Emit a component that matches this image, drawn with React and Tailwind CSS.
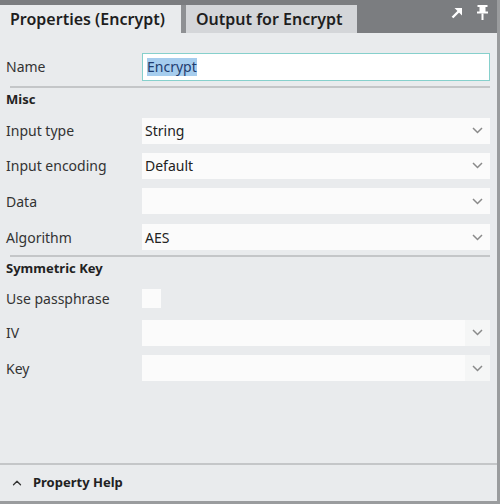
import { ChevronDown, ChevronUp } from 'lucide-react';

const Row = ({ label, h = 'h-[35px]', children }) => (
    <div className={`flex items-center ${h}`}>
        <span className="w-[142px] pl-[6px] text-[14px] text-[#333]">{label}</span>
        <div className="flex-1 pr-[7px]">{children}</div>
    </div>
);

const Select = ({ value, split }) => (
    <div className="flex items-center h-[26px] bg-[#fbfbfb]">
        <span className="flex-1 pl-[3px] text-[14px] text-[#222]">{value}</span>
        <span className={`flex items-center justify-center w-[25px] h-full ${split ? 'bg-[#f5f6f6]' : ''}`}>
            <svg width="11" height="7" viewBox="0 0 11 7" fill="none">
                <path d="M1 1 L5.5 5.5 L10 1" stroke="#8a8a8a" strokeWidth="1.5" />
            </svg>
        </span>
    </div>
);

const Section = ({ title }) => (
    <div className="h-[24px] flex items-center pl-[6px] text-[13px] font-bold text-[#222]">{title}</div>
);

const Divider = () => <div className="ml-[10px] mr-[7px] h-[2px] bg-[#c4c6c8]" />;

export default function App() {
    return (
        <div
            className="w-[500px] h-[504px] flex flex-col bg-[#e9ebed] border-r-[3px] border-b-[3px] border-[#9a9c9e]"
            style={{ fontFamily: '"Noto Sans", "Open Sans", sans-serif' }}
        >
            {/* Tabs */}
            <div className="h-[33px] flex items-end bg-[#7b7d80] shrink-0">
                <div className="h-[28px] w-[181px] bg-[#e9ebed] flex items-center pl-[10px] text-[16px] font-semibold text-[#1e1e1e]">
                    Properties (Encrypt)
                </div>
                <div className="h-[28px] w-[5px] bg-[#8e9093]" />
                <div className="h-[28px] w-[171px] bg-[#d4d6d9] flex items-center pl-[10px] text-[16px] font-semibold text-[#1e1e1e]">
                    Output for Encrypt
                </div>
                <div className="flex-1 h-full flex items-start justify-end gap-[14px] pt-[5px] pr-[9px]">
                    <svg width="12" height="12" viewBox="0 0 12 12" fill="none" className="mt-[2px]">
                        <path d="M1.5 10.5 L8 4" stroke="white" strokeWidth="2.4" />
                        <path d="M3.5 1 H11 V8.5 Z" fill="white" />
                    </svg>
                    <svg width="11" height="15" viewBox="0 0 11 15" fill="white">
                        <rect x="0.5" y="0" width="10" height="2" />
                        <rect x="2.5" y="2" width="6" height="5" />
                        <rect x="0" y="6.5" width="11" height="2" />
                        <rect x="4.5" y="8.5" width="2" height="6.5" />
                    </svg>
                </div>
            </div>

            {/* Properties grid */}
            <div className="flex-1 flex flex-col pt-[16px]">
                <Row label="Name">
                    <div className="h-[28px] bg-white border-[1.5px] border-[#86d0cc] flex items-center pl-[4px]">
                        <span className="bg-[#a6cdee] text-[14px] text-[#1f3c6e] leading-[18px]">Encrypt</span>
                    </div>
                </Row>
                <div className="h-[2px]" />
                <Divider />
                <Section title="Misc" />
                <div className="h-[1px]" />
                <Row label="Input type"><Select value="String" /></Row>
                <Row label="Input encoding"><Select value="Default" /></Row>
                <Row label="Data" h="h-[36px]"><Select value="" /></Row>
                <Row label="Algorithm" h="h-[36px]"><Select value="AES" /></Row>
                <Divider />
                <Section title="Symmetric Key" />
                <Row label="Use passphrase" h="h-[34px]">
                    <div className="w-[19px] h-[19px] bg-[#fbfbfb]" />
                </Row>
                <Row label="IV"><Select value="" split /></Row>
                <Row label="Key" h="h-[36px]"><Select value="" split /></Row>
            </div>

            {/* Property help */}
            <div className="h-[38px] shrink-0 border-t-[2px] border-[#c4c6c8] flex items-center gap-[9px] pl-[10px]">
                <ChevronUp className="w-[14px] h-[14px] text-[#333]" strokeWidth={2.2} />
                <span className="text-[13px] font-bold text-[#222]">Property Help</span>
            </div>
        </div>
    );
}
